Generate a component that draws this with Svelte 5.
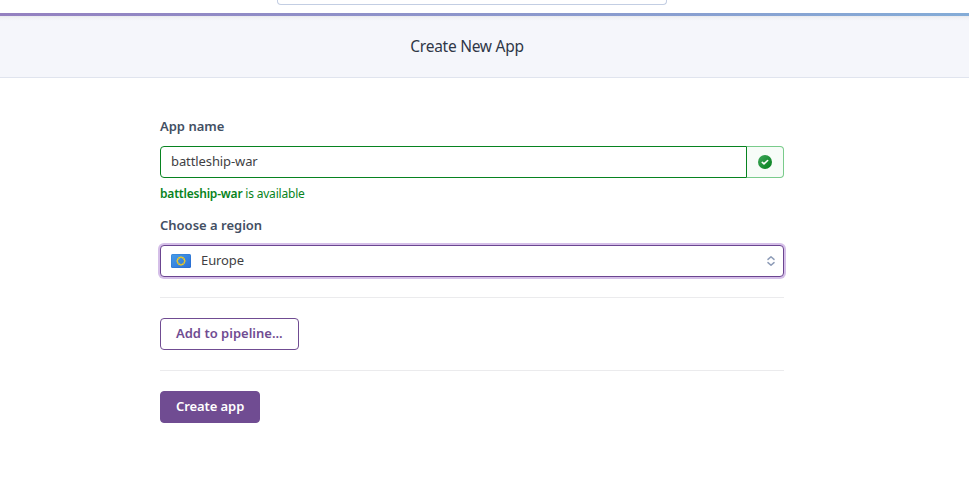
<script>
  let appName = $state('battleship-war');
  const stars = Array.from({ length: 12 }, (_, i) => ({
    x: 10 + 3.7 * Math.cos((i * Math.PI) / 6),
    y: 7 + 3.7 * Math.sin((i * Math.PI) / 6)
  }));
</script>

<div class="page">
  <header class="topbar"><div class="search"></div></header>
  <div class="rainbow"></div>
  <div class="heading"><h1>Create New App</h1></div>

  <main>
    <label class="label" for="name">App name</label>
    <div class="group">
      <input id="name" type="text" bind:value={appName} spellcheck="false" />
      <div class="addon">
        <svg width="14" height="14" viewBox="0 0 14 14">
          <defs>
            <linearGradient id="ok" x1="0" y1="0" x2="1" y2="1">
              <stop offset="0" stop-color="#3fa65a" />
              <stop offset="1" stop-color="#04801c" />
            </linearGradient>
          </defs>
          <circle cx="7" cy="7" r="7" fill="url(#ok)" />
          <path d="M4.3 7.4 6 8.8 9.6 5.5" fill="none" stroke="#fff" stroke-width="1.6" stroke-linecap="round" stroke-linejoin="round" />
        </svg>
      </div>
    </div>
    <p class="message"><strong>{appName}</strong>{' is available'}</p>

    <div class="label region">Choose a region</div>
    <button class="select" type="button">
      <svg class="flag" width="20" height="14" viewBox="0 0 20 14">
        <defs>
          <linearGradient id="eu" x1="0" y1="0" x2="1" y2="1">
            <stop offset="0" stop-color="#479de8" />
            <stop offset="1" stop-color="#2b6fd8" />
          </linearGradient>
        </defs>
        <rect width="20" height="14" rx="1.5" fill="url(#eu)" />
        <rect x=".5" y=".5" width="19" height="13" rx="1" fill="none" stroke="#1f5fc0" stroke-opacity=".25" />
        {#each stars as s}
          <circle cx={s.x} cy={s.y} r=".95" fill="#f3cb20" />
        {/each}
      </svg>
      <span class="t-europe">Europe</span>
      <svg class="sort" width="10" height="12" viewBox="0 0 10 12" fill="none" stroke="#8f9db8" stroke-width="1.5" stroke-linecap="round" stroke-linejoin="round">
        <path d="M2 4.4 5 1.7 8 4.4M2 7.6 5 10.3 8 7.6" />
      </svg>
    </button>

    <hr />
    <button class="btn outline" type="button">Add to pipeline...</button>
    <hr />
    <button class="btn solid" type="button">Create app</button>
  </main>
</div>

<style>
  :global(body) {
    margin: 0;
    background: #fff;
  }
  .page {
    height: 489px;
    overflow: hidden;
    font-family: 'Noto Sans', 'Open Sans', sans-serif;
    font-size: 13px;
    color: #3f3f44;
  }
  .page * {
    box-sizing: border-box;
  }
  .topbar {
    height: 13px;
    display: flex;
    justify-content: center;
    padding-right: 25px;
  }
  .search {
    width: 390px;
    height: 5px;
    border: 1px solid #c3cee3;
    border-top: 0;
    border-radius: 0 0 4px 4px;
  }
  .rainbow {
    height: 3px;
    background: linear-gradient(90deg, #9480c0, #84acd7);
  }
  .heading {
    height: 62px;
    display: flex;
    justify-content: center;
    align-items: center;
    padding: 0 35px 2px 0;
    background: linear-gradient(#e8e9ed, #f1f2f6 2px, #f5f6fb 5px);
    border-bottom: 1px solid #e0e4ee;
  }
  h1 {
    margin: 0;
    font-size: 15.5px;
    letter-spacing: -0.27px;
    font-weight: 400;
    line-height: 24px;
    color: #2f3747;
  }
  main {
    width: 624px;
    margin-left: 160px;
    padding-top: 38px;
    display: flex;
    flex-direction: column;
    align-items: flex-start;
  }
  .label {
    height: 20px;
    line-height: 20px;
    font-weight: 600;
    color: #434f63;
  }
  .group {
    width: 100%;
    height: 32px;
    margin-top: 10px;
    display: flex;
  }
  input {
    width: 587px;
    padding: 0 10px 2px;
    border: 1px solid #078320;
    border-radius: 4px 0 0 4px;
    outline: 0;
    background: #fff;
    font: inherit;
    letter-spacing: -0.1px;
    color: inherit;
  }
  .addon {
    flex: 1;
    display: flex;
    align-items: center;
    justify-content: center;
    border: 1px solid #79cb8b;
    border-left: 0;
    border-radius: 0 4px 4px 0;
    background: #f7fcf8;
  }
  .message {
    margin: 7px 0 0;
    height: 17px;
    line-height: 17px;
    font-size: 12px;
    letter-spacing: -0.2px;
    color: #078320;
    white-space: pre;
  }
  .message strong {
    font-weight: 600;
  }
  .region {
    margin-top: 13px;
  }
  .select {
    width: 100%;
    height: 32px;
    margin-top: 10px;
    padding: 0 7px 0 10px;
    display: flex;
    align-items: center;
    border: 1px solid #6b4590;
    border-radius: 4px;
    box-shadow: 0 0 0 2px #d5bfe8;
    background: #fff;
    font: inherit;
    color: inherit;
  }
  .t-europe {
    margin-left: 10px;
    padding-bottom: 2px;
    letter-spacing: -0.1px;
  }
  .sort {
    margin-left: auto;
  }
  hr {
    width: 100%;
    height: 1px;
    margin: 20px 0;
    border: 0;
    background: #ebebed;
  }
  .btn {
    height: 32px;
    padding: 0 0 2px 15px;
    border: 1px solid #704c92;
    border-radius: 4px;
    font: inherit;
    font-weight: 600;
    text-align: left;
    white-space: nowrap;
  }
  .outline {
    width: 139px;
    background: #fff;
    color: #704c92;
  }
  .solid {
    width: 100px;
    background: #704c92;
    color: #fff;
    letter-spacing: -0.08px;
  }
</style>
